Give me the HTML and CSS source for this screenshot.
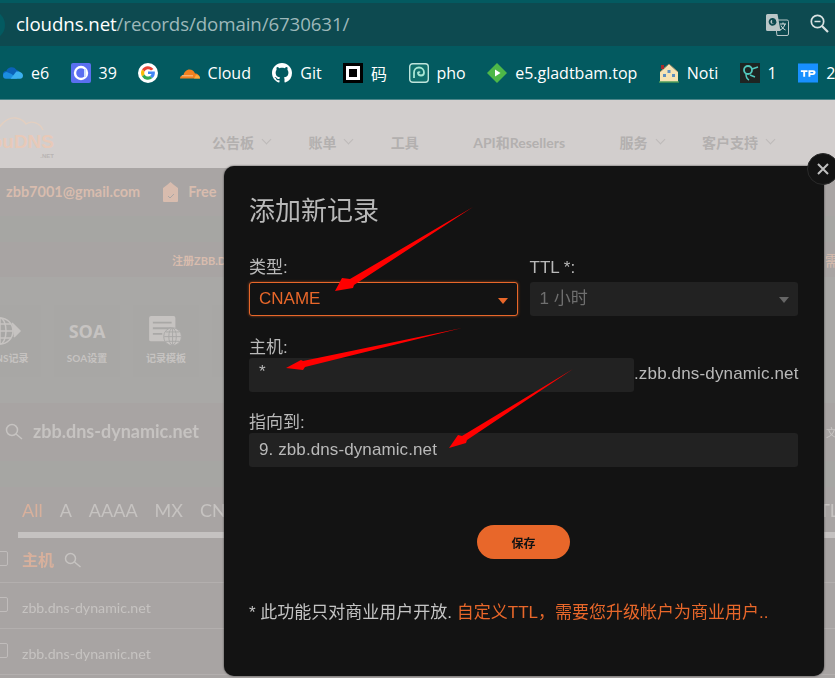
FILE: index.html
```html
<!DOCTYPE html>
<html lang="zh">
<head>
	<meta charset="utf-8">
	<title>ClouDNS</title>
	<link rel="stylesheet" href="styles.css">
</head>
<body>
	<div class="browser">
		<div class="urlbar">
			<div class="siteinfo"></div>
			<div class="url"><b>cloudns.net</b>/records/domain/6730631/</div>
			<svg class="translate" width="23" height="22" viewBox="0 0 23 22">
				<path d="M9 6h12a1.500 1.500 0 0 1 1.500 1.500V20a1.500 1.500 0 0 1-1.500 1.500H11z" fill="#0d4a50" stroke="#b9c6c7"/>
				<path d="M1.500 0h10l3 17H1.500A1.500 1.500 0 0 1 0 15.500V1.500A1.500 1.500 0 0 1 1.500 0z" fill="#b9c6c7"/>
				<path d="M10 6.500H7v2h2.500a3 3 0 1 1-.9-2.800" fill="none" stroke="#0d4a50" stroke-width="1.800"/>
				<path d="M14 10h6M17 8.500v1.500M19 10c-.8 3-2.500 5-5 6M15 11.500c.8 2 2.500 3.500 4.500 4.500" fill="none" stroke="#d5dddd"/>
			</svg>
			<svg class="zoomicon" width="19" height="19" viewBox="0 0 19 19" fill="none" stroke="#d9e2e2">
				<circle cx="7.500" cy="7.500" r="6.200" stroke-width="1.700"/>
				<path d="M4.500 7.500h6" stroke-width="1.500"/>
				<path d="M12 12l6 6" stroke-width="2.200"/>
			</svg>
		</div>
		<div class="bookmarks">
			<div class="bm">
				<svg class="fav" viewBox="0 0 21 20"><path d="M3 15a3.500 3.500 0 0 1 .5-7A6 6 0 0 1 14 6.500a4.500 4.500 0 0 1 3 2L8 15z" fill="#0b62b8"/><path d="M3 16c-2 0-3-1.500-3-3.500S2 9 4 9l5 2 6 5z" fill="#1b8ee0"/><path d="M8 16l6-7.500c3-.8 7 1 7 4.500 0 2-1.500 3-3 3z" fill="#3bb0ef"/></svg>
				<span>e6</span>
			</div>
			<div class="bm">
				<svg class="fav" viewBox="0 0 20 20"><rect width="20" height="20" rx="2" fill="#5a6ff0"/><circle cx="10" cy="10" r="6" fill="none" stroke="#fff" stroke-width="2.400"/><path d="M14 6v8" stroke="#cfe0ff" stroke-width="2"/></svg>
				<span>39</span>
			</div>
			<div class="bm">
				<svg class="fav" viewBox="0 0 20 20"><circle cx="10" cy="10" r="10" fill="#fff"/><path d="M15.500 6A7 7 0 0 0 4 6.500l2.500 2A4 4 0 0 1 13 7.500z" fill="#ea4335"/><path d="M4 6.500a7 7 0 0 0 0 7l2.500-2a4 4 0 0 1 0-3z" fill="#fbbc05"/><path d="M4 13.500a7 7 0 0 0 10.500 1.500L12 13a4 4 0 0 1-5.500-1.500z" fill="#34a853"/><path d="M10 8.500h6.800c.3 2.500-.3 5-2.300 6.500L12 13c.8-.5 1.300-1.200 1.500-2H10z" fill="#4285f4"/></svg>
			</div>
			<div class="bm">
				<svg class="fav" viewBox="0 0 20 20"><path d="M0 15.500c0-2 1.500-3.500 3.500-3.500.5-3 3-5.500 6-5.500 2.500 0 4.500 1.500 5.500 4 2.500 0 5 2 5 5z" fill="#f48120"/><path d="M14 15.500h6c0-2-1.500-3.500-4-3.500z" fill="#faad3f"/><path d="M2 12.800h11" stroke="#fde4c8" stroke-width=".7"/></svg>
				<span>Cloud</span>
			</div>
			<div class="bm">
				<svg class="fav" viewBox="0 0 16 16"><path fill="#fff" d="M8 0C3.580 0 0 3.580 0 8c0 3.540 2.290 6.530 5.470 7.590.4.070.55-.17.55-.38 0-.19-.01-.82-.01-1.490-2.010.37-2.530-.49-2.690-.94-.09-.23-.48-.94-.82-1.130-.28-.15-.68-.52-.01-.53.630-.01 1.080.58 1.230.82.720 1.210 1.870.87 2.330.66.070-.52.280-.87.510-1.070-1.780-.2-3.640-.89-3.640-3.950 0-.87.310-1.590.82-2.150-.08-.2-.36-1.020.08-2.120 0 0 .67-.21 2.200.82.640-.18 1.320-.27 2-.27s1.360.09 2 .27c1.530-1.040 2.200-.82 2.200-.82.440 1.100.16 1.920.08 2.120.51.560.82 1.270.82 2.150 0 3.070-1.870 3.750-3.650 3.950.29.250.54.730.54 1.480 0 1.070-.01 1.930-.01 2.200 0 .21.150.46.550.38A8.010 8.010 0 0 0 16 8c0-4.420-3.580-8-8-8z"/></svg>
				<span>Git</span>
			</div>
			<div class="bm">
				<svg class="fav" viewBox="0 0 20 20"><rect width="20" height="20" fill="#000"/><rect x="3" y="3" width="14" height="14" fill="#fff"/><rect x="6" y="6" width="8" height="8" fill="#000"/></svg>
				<span>码</span>
			</div>
			<div class="bm">
				<svg class="fav" viewBox="0 0 20 20"><rect x=".7" y=".7" width="18.600" height="18.600" rx="3" fill="#0f6f6b" stroke="#bfe4dc" stroke-width="1.400"/><path d="M5 15V9.500a5 5 0 0 1 10 0 3 3 0 0 1-6 0 1.300 1.300 0 0 1 2 0" fill="none" stroke="#a8e6d4" stroke-width="1.800"/></svg>
				<span>pho</span>
			</div>
			<div class="bm">
				<svg class="fav" viewBox="0 0 20 20"><path d="M10 0l10 10-10 10L0 10z" fill="#4eb748"/><path d="M8 6.500l5.500 3.500L8 13.500z" fill="#fff"/></svg>
				<span>e5.gladtbam.top</span>
			</div>
			<div class="bm">
				<svg class="fav" viewBox="0 0 20 20"><path d="M1 9l9-8 9 8v10H1z" fill="#f6e3b4"/><path d="M10 1L1 9M10 1l9 8" stroke="#9a8a68" fill="none"/><path d="M2 2h3v4H2z" fill="#a82a2a"/><path d="M4 11h3v3H4zM13 11h3v3h-3zM8.500 7h3v3h-3z" fill="#5d8fc0"/><path d="M0 19h20" stroke="#4f9c58" stroke-width="1.500"/></svg>
				<span>Noti</span>
			</div>
			<div class="bm">
				<svg class="fav" viewBox="0 0 20 20"><rect width="20" height="20" fill="#1e2422"/><circle cx="8" cy="7" r="4" fill="none" stroke="#52c8bd" stroke-width="1.800"/><path d="M12 6l6-2M6 11c0 3 1 5 3 6M10 12l5 2" stroke="#52c8bd" stroke-width="1.500" fill="none"/></svg>
				<span>1</span>
			</div>
			<div class="bm">
				<svg class="fav" viewBox="0 0 21 20"><rect width="21" height="20" fill="#1890ff"/><path d="M3 7h7v2H7.500v5h-2V9H3zM11 7h5a2.500 2.500 0 0 1 0 5h-3v2h-2zm2 2v1.300h3V9z" fill="#fff"/></svg>
				<span>2</span>
			</div>
		</div>
	</div>

	<div class="page">
		<div class="sitehead">
			<svg class="logo" width="54" height="54" viewBox="0 0 54 54">
				<path d="M-2 22C2 16 8 10 16 11c5 1 8 3 10 6 6-4 14-1 17 6" fill="none" stroke="#e3cfc0" stroke-width="1.400"/>
				<text x="54" y="41" text-anchor="end" class="logotext">ouDNS</text>
				<text x="54" y="51" text-anchor="end" class="logonet">.NET</text>
			</svg>
			<nav class="nav">
				<a>公告板<i class="chev"></i></a>
				<a>账单<i class="chev"></i></a>
				<a>工具<i class="chev none"></i></a>
				<a>API和Resellers<i class="chev none"></i></a>
				<a>服务<i class="chev"></i></a>
				<a>客户支持<i class="chev"></i></a>
			</nav>
		</div>
		<div class="account">
			<span class="email">zbb7001@gmail.com</span>
			<svg width="15" height="20" viewBox="0 0 15 20"><path d="M4 3l3.500-3L11 3l4 3v13a1 1 0 0 1-1 1H1a1 1 0 0 1-1-1V6z" fill="#d8bcae"/><path d="M5 14l2 2 4-4" fill="none" stroke="#a9a5a4"/></svg>
			<span class="plan">Free</span>
		</div>
		<div class="strip"></div>
		<div class="notice">
			<span>注册ZBB.DNS-DYNAMIC.NET</span>
			<span class="notice-end">需</span>
		</div>
		<div class="tools">
			<div class="tool">
				<svg width="44" height="28" viewBox="0 0 44 28" fill="none" stroke="#c6c3c1" stroke-width="1.500"><circle cx="14" cy="14" r="13"/><ellipse cx="14" cy="14" rx="6" ry="13"/><path d="M1 14h26M3 7h22M3 21h22M14 1v26"/><path d="M26 6l8 8-6 6" fill="#c6c3c1"/></svg>
				<span>DNS记录</span>
			</div>
			<div class="tool">
				<div class="soa">SOA</div>
				<span>SOA设置</span>
			</div>
			<div class="tool">
				<svg width="36" height="32" viewBox="0 0 36 32"><rect width="28" height="27" rx="2" fill="#c6c3c1"/><path d="M4 7h20M4 13h20M4 19h10" stroke="#a9a8a6" stroke-width="2"/><circle cx="25" cy="22" r="9.500" fill="#c6c3c1" stroke="#a9a8a6"/><g fill="none" stroke="#a9a8a6"><ellipse cx="25" cy="22" rx="4" ry="9"/><path d="M16 22h18M18 17h14M18 27h14M25 13v18"/></g></svg>
				<span>记录模板</span>
			</div>
			<div class="tool"></div>
		</div>
		<div class="search">
			<svg width="18" height="18" viewBox="0 0 18 18" fill="none" stroke="#c6c3c1" stroke-width="1.500"><circle cx="7" cy="7" r="5.500"/><path d="M11 11l6 5"/></svg>
			<span class="domain">zbb.dns-dynamic.net</span>
			<span class="search-end">文</span>
		</div>
		<div class="strip band"></div>
		<div class="tabs">
			<span class="tab on">All</span>
			<span class="tab">A</span>
			<span class="tab">AAAA</span>
			<span class="tab">MX</span>
			<span class="tab">CNAME</span>
			<span class="tab-end">TL</span>
		</div>
		<div class="tabline"></div>
		<div class="row head">
			<i class="check"></i>
			<span class="hostcol">主机</span>
			<svg width="18" height="16" viewBox="0 0 18 16" fill="none" stroke="#c6c3c1" stroke-width="1.500"><circle cx="6.500" cy="6.500" r="5"/><path d="M10.500 10l6 5"/></svg>
		</div>
		<div class="row">
			<i class="check"></i>
			<span class="cell">zbb.dns-dynamic.net</span>
		</div>
		<div class="row">
			<i class="check"></i>
			<span class="cell">zbb.dns-dynamic.net</span>
		</div>
	</div>

	<div class="modal">
		<h2 class="modal-title">添加新记录</h2>
		<div class="two">
			<div>
				<label>类型:</label>
				<div class="field select active">CNAME<i class="caret"></i></div>
			</div>
			<div>
				<label>TTL *:</label>
				<div class="field select off">1 小时<i class="caret"></i></div>
			</div>
		</div>
		<label class="gap">主机:</label>
		<div class="hostline">
			<div class="field host">*</div>
			<span>.zbb.dns-dynamic.net</span>
		</div>
		<label class="gap2">指向到:</label>
		<div class="field wide">9. zbb.dns-dynamic.net</div>
		<div class="actions"><button class="save">保存</button></div>
		<p class="foot">* 此功能只对商业用户开放. <em>自定义TTL，需要您升级帐户为商业用户..</em></p>
		<div class="close">
			<svg width="12" height="12" viewBox="0 0 12 12"><path d="M1 1l10 10M11 1L1 11" stroke="#c0c0c0" stroke-width="2"/></svg>
		</div>
	</div>

	<svg class="arrows" width="835" height="678" viewBox="0 0 835 678">
		<path d="M473 207L350 279 342 278 335 291 353 288 354 285z"/>
		<path d="M462 328L303 361 301 360 286 368 303 370 305 367z"/>
		<path d="M573 369L462 436 458 435 449 448 466 443 467 440z"/>
	</svg>
</body>
</html>
```

FILE: styles.css
```css
html, body {
	margin: 0;
	height: 678px;
	overflow: hidden;
	background: #a8a4a3;
}
body {
	position: relative;
	font-family: Lato, "Noto Sans CJK SC", sans-serif;
}

/* browser chrome */
.browser {
	background: #035a60;
	padding-top: 3px;
	font-family: "Open Sans", "Noto Sans CJK SC", sans-serif;
}
.urlbar {
	height: 43px;
	background: #0d4a50;
	display: flex;
	align-items: center;
	position: relative;
}
.siteinfo {
	width: 30px;
	height: 30px;
	margin-left: -25px;
	border-radius: 50%;
	background: #035a60;
}
.url {
	margin-left: 11px;
	font-size: 18.700px;
	color: #9db8ba;
	letter-spacing: -0.1px;
	flex: 1;
	margin-top: -2px;
}
.url b {
	font-weight: normal;
	color: #fff;
}
.translate {
	margin-right: 21px;
}
.zoomicon {
	margin-right: 6px;
	margin-top: -3px;
}
.bookmarks {
	height: 53px;
	display: flex;
	align-items: center;
	gap: 21.400px;
	padding-left: 3px;
	white-space: nowrap;
	overflow: hidden;
	border-bottom: 1px solid #4c8589;
	color: #fff;
	font-size: 16px;
}
.bm {
	display: flex;
	align-items: center;
	gap: 8px;
	flex-shrink: 0;
}
.fav {
	width: 20px;
	height: 20px;
}

/* the dimmed page behind the dialog */
.page {
	filter: blur(0.5px);
	color: #c6c3c1;
	overflow: hidden;
}
.sitehead {
	height: 68px;
	background: #d2cecd;
	display: flex;
	align-items: center;
	box-sizing: border-box;
}
.logo {
	flex-shrink: 0;
}
.logotext {
	font: bold 19px "Liberation Sans", sans-serif;
	fill: #e8c9b8;
}
.logonet {
	font: bold 6px "Liberation Sans", sans-serif;
	fill: #b9b5b4;
}
.nav {
	margin-left: 158px;
	margin-top: 15px;
	display: flex;
	gap: 37.400px;
	font-size: 14px;
	font-weight: bold;
	color: #b3b0af;
	white-space: nowrap;
}
.nav a {
	display: flex;
	align-items: center;
	gap: 8px;
}
.chev {
	width: 7px;
	height: 7px;
	margin: -4px 1px 0 1px;
	border-right: 1px solid #bdbab9;
	border-bottom: 1px solid #bdbab9;
	transform: rotate(45deg);
	box-sizing: border-box;
}
.chev.none {
	visibility: hidden;
}
.account {
	height: 48px;
	background: #a9a5a4;
	display: flex;
	align-items: center;
	padding-left: 6px;
	font-weight: bold;
	font-size: 14.500px;
	color: #d8bcae;
}
.email {
	margin-right: 23px;
	margin-top: -2px;
}
.plan {
	margin-left: 10px;
	margin-top: -2px;
}
.strip {
	height: 26px;
	background: #a6a6a3;
}
.notice {
	height: 35px;
	background: #a8a4a3;
	display: flex;
	align-items: center;
	padding-left: 172px;
	font-size: 11px;
	font-weight: bold;
	color: #d8bcae;
	white-space: nowrap;
}
.notice-end {
	margin-left: auto;
	margin-right: -4px;
	font-size: 14px;
	font-weight: normal;
}
.tools {
	height: 126px;
	box-sizing: border-box;
	background: #a9a8a6;
	padding-top: 28px;
	display: flex;
	gap: 13px;
	margin-left: -25px;
}
.tool {
	width: 66px;
	height: 72px;
	flex-shrink: 0;
	box-sizing: border-box;
	background: #a8a7a5;
	padding-top: 11px;
	display: flex;
	flex-direction: column;
	align-items: center;
	gap: 4px;
	font-size: 10px;
	font-weight: bold;
	white-space: nowrap;
}
.tool svg {
	height: 30px;
}
.soa {
	height: 30px;
	line-height: 30px;
	font-size: 18px;
	font-family: "Open Sans", sans-serif;
}
.search {
	height: 58px;
	display: flex;
	align-items: center;
	padding-left: 5px;
	font-size: 18px;
	font-weight: bold;
}
.domain {
	margin-left: 10px;
	margin-top: -2px;
}
.search-end {
	margin-left: auto;
	margin-right: -2px;
	font-size: 11px;
	font-weight: normal;
}
.band {
	height: 26px;
}
.tabs {
	height: 45px;
	display: flex;
	align-items: center;
	gap: 17px;
	padding-left: 22px;
	font-size: 18px;
	white-space: nowrap;
}
.tab.on {
	color: #d8b09c;
}
.tab-end {
	margin-left: auto;
	margin-right: -4px;
}
.tabline {
	height: 6px;
	margin-left: 18px;
	background: #c5c2c1;
}
.row {
	height: 46px;
	box-sizing: border-box;
	display: flex;
	align-items: center;
	border-bottom: 1px solid #b3afae;
	font-size: 14.200px;
}
.row.head {
	height: 45px;
}
.cell {
	margin-top: 4px;
}
.check {
	width: 14px;
	height: 15px;
	margin-left: -6px;
	margin-right: 14px;
	margin-top: -3px;
	border: 1px solid #c0bcbb;
	border-radius: 2px;
	box-sizing: border-box;
}
.hostcol {
	font-size: 16px;
	font-weight: bold;
	color: #d8b09c;
	margin-right: 10px;
	margin-top: -2px;
}

/* dialog */
.modal {
	position: absolute;
	left: 224px;
	top: 166px;
	width: 600px;
	height: 510px;
	box-sizing: border-box;
	padding: 27px 26px 0 25px;
	border-radius: 10px;
	background: #131313;
	box-shadow: 0 0 2px #333;
	color: #b9b9b9;
	font-family: "Liberation Sans", "Noto Sans CJK SC", sans-serif;
	font-size: 17px;
}
.modal-title {
	margin: 0 0 28px;
	font-size: 26px;
	line-height: 36px;
	font-weight: normal;
}
.modal label {
	display: block;
	line-height: 22px;
	margin-bottom: 3px;
}
.modal label.gap {
	margin-top: 21px;
	margin-bottom: -1px;
}
.modal label.gap2 {
	margin-top: 20px;
	margin-bottom: -1px;
}
.two {
	display: grid;
	grid-template-columns: 1fr 1fr;
	gap: 12px;
}
.field {
	height: 34px;
	line-height: 34px;
	box-sizing: border-box;
	padding: 0 10px;
	background: #222;
	border-radius: 3px;
	white-space: nowrap;
}
.wide {
	letter-spacing: 0.1px;
}
.select {
	position: relative;
}
.active {
	background: #131313;
	border: 1px solid #e8672a;
	line-height: 32px;
	padding: 0 9px;
	color: #e8672a;
	box-shadow: 0 0 3px rgba(232, 103, 42, 0.6);
}
.off {
	color: #6f6f6f;
}
.caret {
	position: absolute;
	right: 9px;
	top: 15px;
	border: 5px solid transparent;
	border-top: 6px solid #e8672a;
	border-bottom: 0;
}
.off .caret {
	border-top-color: #666;
}
.hostline {
	display: flex;
	align-items: center;
	white-space: nowrap;
}
.host {
	width: 385px;
	flex-shrink: 0;
	line-height: 28px;
}
.hostline span {
	margin-top: -3px;
	letter-spacing: 0.15px;
}
.actions {
	margin-top: 58px;
	text-align: center;
}
.save {
	width: 93px;
	height: 34px;
	border: 0;
	border-radius: 17px;
	background: #e8672a;
	color: #131313;
	font: bold 12px "Noto Sans CJK SC", sans-serif;
	padding: 0;
}
.foot {
	margin: 42px 0 0;
	line-height: 24px;
	white-space: nowrap;
	color: #c4c4c4;
}
.foot em {
	font-style: normal;
	color: #e8672a;
}
.close {
	position: absolute;
	right: -15px;
	top: -13px;
	width: 32px;
	height: 32px;
	border-radius: 50%;
	background: #131313;
	border: 1px solid #2a2a2a;
	box-sizing: border-box;
	display: flex;
	align-items: center;
	justify-content: center;
}
.arrows {
	position: absolute;
	left: 0;
	top: 0;
	fill: #f00;
}
```
